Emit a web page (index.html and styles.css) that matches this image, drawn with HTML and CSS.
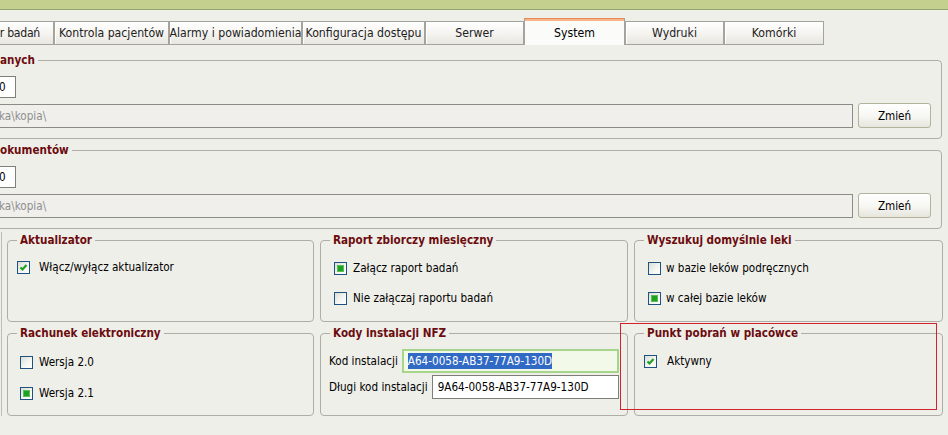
FILE: index.html
```html
<!DOCTYPE html>
<html lang="pl">
<head>
<meta charset="utf-8">
<title>System</title>
<link rel="stylesheet" href="styles.css">
</head>
<body>
<div class="topbar"></div>
<div class="tabs">
  <div class="tab t-first">r badań</div>
  <div class="tab t-kon">Kontrola pacjentów</div>
  <div class="tab t-ala">Alarmy i powiadomienia</div>
  <div class="tab t-cfg">Konfiguracja dostępu</div>
  <div class="tab t-std">Serwer</div>
  <div class="tab t-sys active">System</div>
  <div class="tab t-std">Wydruki</div>
  <div class="tab t-kom">Komórki</div>
</div>
<div class="panel">
  <fieldset class="wide">
    <legend>anych</legend>
    <div class="short">0</div>
    <div class="pathrow">
      <div class="path">ka\kopia\</div>
      <div class="btn">Zmień</div>
    </div>
  </fieldset>
  <fieldset class="wide second">
    <legend>okumentów</legend>
    <div class="short">0</div>
    <div class="pathrow">
      <div class="path">ka\kopia\</div>
      <div class="btn">Zmień</div>
    </div>
  </fieldset>
  <div class="lower">
  <div class="grid">
    <fieldset class="box">
      <legend>Aktualizator</legend>
      <div class="opts o-akt">
        <div class="opt"><span class="cb"><svg width="11" height="11" viewBox="0 0 11 11"><polyline points="2.5,5.5 4.5,7.5 8.5,3" fill="none" stroke="#21a121" stroke-width="2.2"/></svg></span><span class="lbl g9">Włącz/wyłącz aktualizator</span></div>
      </div>
    </fieldset>
    <fieldset class="box">
      <legend>Raport zbiorczy miesięczny</legend>
      <div class="opts o-rap">
        <div class="opt"><span class="cb on"></span><span class="lbl g6">Załącz raport badań</span></div>
        <div class="opt"><span class="cb"></span><span class="lbl g6">Nie załączaj raportu badań</span></div>
      </div>
    </fieldset>
    <fieldset class="box">
      <legend>Wyszukuj domyślnie leki</legend>
      <div class="opts o-wys">
        <div class="opt"><span class="cb"></span><span class="lbl g5">w bazie leków podręcznych</span></div>
        <div class="opt"><span class="cb on"></span><span class="lbl g5">w całej bazie leków</span></div>
      </div>
    </fieldset>
    <fieldset class="box">
      <legend>Rachunek elektroniczny</legend>
      <div class="opts o-rach">
        <div class="opt"><span class="cb"></span><span class="lbl g6">Wersja 2.0</span></div>
        <div class="opt"><span class="cb on"></span><span class="lbl g6">Wersja 2.1</span></div>
      </div>
    </fieldset>
    <fieldset class="box">
      <legend>Kody instalacji NFZ</legend>
      <div class="kody">
        <div class="krow"><span class="klbl">Kod instalacji</span><span class="kin focus"><span class="sel">A64-0058-AB37-77A9-130D</span></span></div>
        <div class="krow"><span class="klbl">Długi kod instalacji</span><span class="kin">9A64-0058-AB37-77A9-130D</span></div>
      </div>
    </fieldset>
    <fieldset class="box">
      <legend>Punkt pobrań w placówce</legend>
      <div class="opts o-pkt">
        <div class="opt"><span class="cb"><svg width="11" height="11" viewBox="0 0 11 11"><polyline points="2.5,5.5 4.5,7.5 8.5,3" fill="none" stroke="#21a121" stroke-width="2.2"/></svg></span><span class="lbl g10">Aktywny</span></div>
      </div>
    </fieldset>
  </div>
  </div>
</div>
<div class="mark"></div>
</body>
</html>
```
FILE: styles.css
```css
html, body {
  margin: 0;
  padding: 0;
}
body {
  width: 948px;
  height: 435px;
  overflow: hidden;
  background: #efefea;
  font-family: "DejaVu Sans Condensed", "DejaVu Sans", sans-serif;
  font-size: 11.6px;
  color: #000;
  position: relative;
}
.topbar {
  height: 9px;
  background: #c4d08d;
  border-bottom: 1px solid #97a36c;
}
.tabs {
  display: flex;
  align-items: flex-end;
  height: 27px;
  margin-top: 8px;
  margin-left: -6px;
  font-size: 12.2px;
}
.tab {
  box-sizing: border-box;
  height: 24px;
  border: 1px solid #a4a49c;
  background: linear-gradient(#ffffff, #f4f3ef 55%, #e7e6df);
  display: flex;
  align-items: center;
  justify-content: center;
  color: #222;
  white-space: nowrap;
  box-shadow: inset 1px 1px 0 #fff;
}
.t-first { width: 60px; justify-content: flex-end; padding-right: 13px; letter-spacing: -0.3px; }
.t-kon { width: 115px; }
.t-ala { width: 133px; }
.t-cfg { width: 123px; }
.t-std { width: 99px; }
.t-sys { width: 101px; }
.t-kom { width: 100px; }
.tab.active {
  height: 27px;
  background: #fbfbf9;
  border-bottom: none;
  border-top: 1px solid #e48a55;
  box-shadow: inset 0 2px 0 #f8b48c;
  color: #000;
  padding-top: 1px;
}
.panel {
  margin-top: 8px;
  margin-left: -10px;
  width: 952px;
}
fieldset {
  margin: 0;
  border: 1px solid #aeaea6;
  border-radius: 4px;
  min-width: 0;
}
legend {
  font-weight: bold;
  color: #6c0c0e;
  line-height: 14px;
  padding: 0 3px;
}
.wide {
  padding: 9px 10px 10px 4px;
}
.wide legend {
  margin-left: 2px;
}
.wide.second {
  margin-top: 4px;
}
.short {
  width: 21px;
  height: 22px;
  box-sizing: border-box;
  border: 1px solid #7f7f7a;
  background: #fff;
  padding-left: 3px;
  line-height: 20px;
}
.pathrow {
  display: flex;
  align-items: center;
  margin-top: 5px;
  gap: 5px;
}
.path {
  flex: 1;
  height: 24px;
  box-sizing: border-box;
  border: 1px solid #8c8c86;
  background: #f0efeb;
  color: #8e8e8e;
  padding-left: 3px;
  line-height: 22px;
}
.btn {
  width: 73px;
  height: 25px;
  box-sizing: border-box;
  border: 1px solid #b3b39c;
  border-radius: 3px;
  background: linear-gradient(#ffffff, #f6f6f2 55%, #e6e5dd);
  display: flex;
  align-items: center;
  justify-content: center;
  color: #000;
}
.lower {
  margin-top: 3px;
  margin-left: 11px;
  padding-top: 1px;
  padding-left: 5px;
  border-left: 1px solid #bdbdb5;
  width: 930px;
}
.grid {
  display: grid;
  grid-template-columns: 307px 308px 309px;
  column-gap: 6px;
  row-gap: 4px;
}
.box {
  padding: 0;
}
.box legend {
  margin-left: 9px;
}
.opts {
  height: 74px;
  box-sizing: border-box;
  display: flex;
  flex-direction: column;
  gap: 14px;
}
.o-akt { padding: 12px 0 0 9px; }
.o-rap { padding: 13px 0 0 13px; }
.o-wys { padding: 13px 0 0 13px; }
.o-rach { padding: 14px 0 0 12px; gap: 15px; }
.o-pkt { padding: 13px 0 0 9px; }
.opt {
  display: flex;
  align-items: center;
  height: 16px;
  white-space: nowrap;
}
.cb {
  width: 13px;
  height: 13px;
  box-sizing: border-box;
  border: 1px solid #1d5281;
  background: linear-gradient(135deg, #dcdcd6, #f6f6f4 60%, #ffffff);
  display: flex;
  align-items: center;
  justify-content: center;
  flex: none;
}
.cb.on::after {
  content: "";
  width: 7px;
  height: 7px;
  box-sizing: border-box;
  background: #1fa21f;
  border: 1px solid #58be58;
}
.g5 { margin-left: 5px; }
.g6 { margin-left: 6px; }
.g9 { margin-left: 9px; }
.g10 { margin-left: 10px; }
.kody {
  height: 75px;
  box-sizing: border-box;
  padding: 9px 8px 0 8px;
  display: flex;
  flex-direction: column;
  gap: 2px;
}
.krow {
  display: flex;
  align-items: center;
  gap: 4px;
}
.klbl {
  white-space: nowrap;
}
.kin {
  flex: 1;
  height: 24px;
  box-sizing: border-box;
  border: 1px solid #7e7e78;
  background: #fff;
  display: flex;
  align-items: center;
  padding-left: 5px;
  white-space: nowrap;
}
.kin.focus {
  border: 2px solid #a7d58c;
  background: #f2f9e8;
  padding-left: 4px;
}
.sel {
  background: #316ac5;
  color: #fff;
  line-height: 16px;
}
.mark {
  position: absolute;
  left: 620px;
  top: 323px;
  width: 317px;
  height: 87px;
  box-sizing: border-box;
  border: 1px solid #d3222b;
}
```
